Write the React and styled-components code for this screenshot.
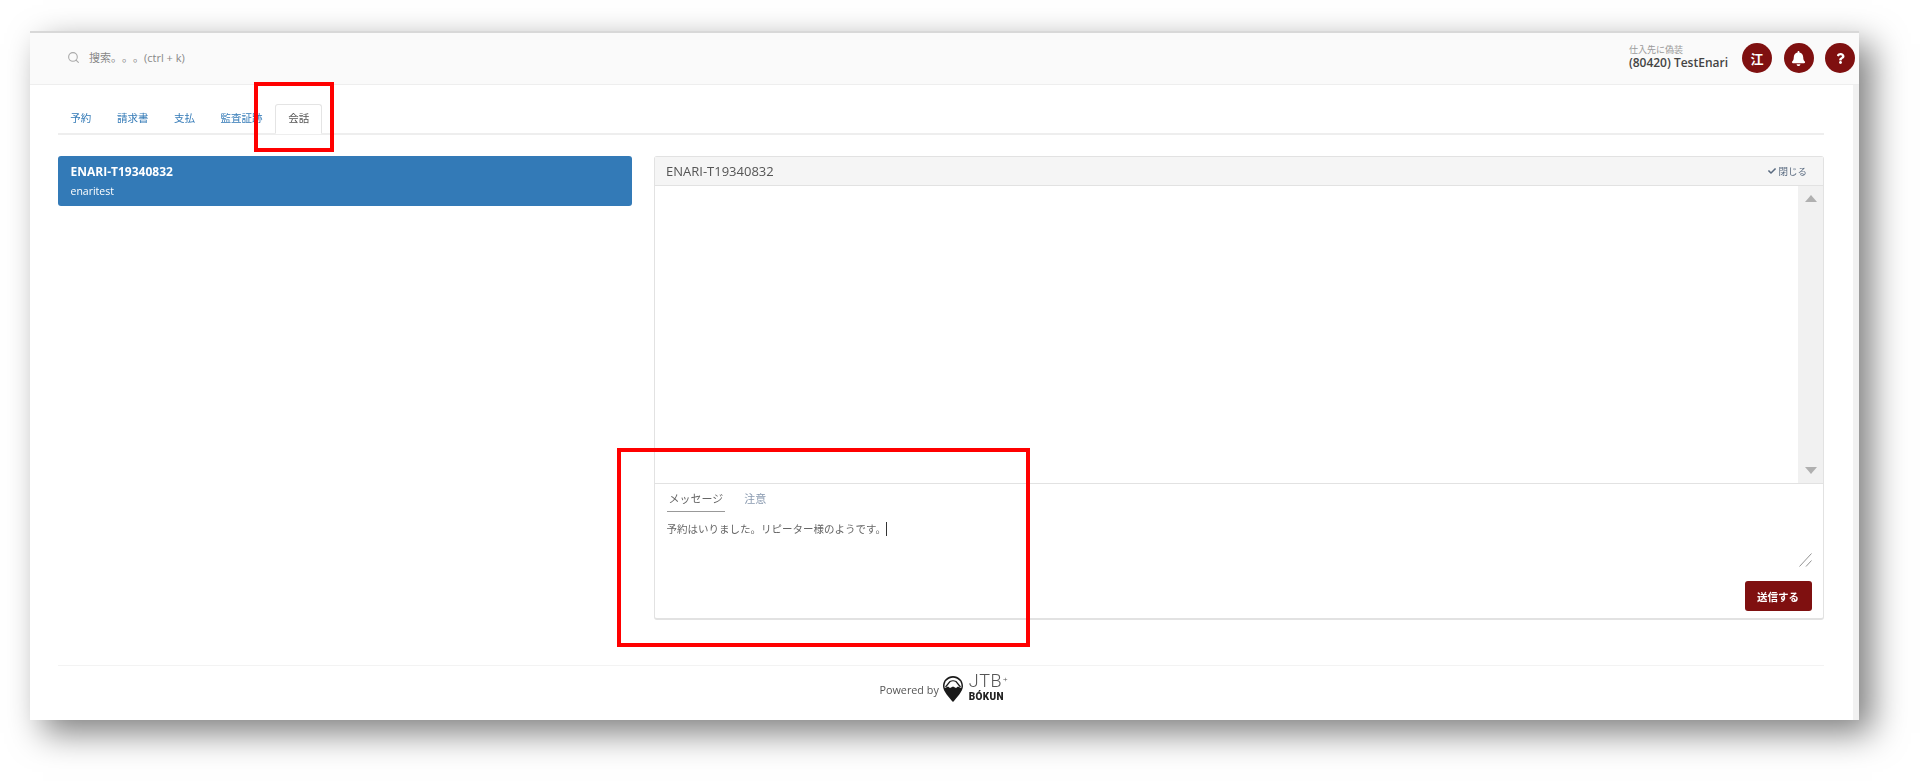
import React from "react";
import styled, { createGlobalStyle } from "styled-components";
import { FaBell, FaCheck, FaQuestion } from "react-icons/fa";
import { FiSearch } from "react-icons/fi";

const GlobalStyle = createGlobalStyle`
  html, body {
    margin: 0;
    background: #fff;
    overflow: hidden;
  }
  body {
    font-family: "Open Sans", "Noto Sans CJK JP", sans-serif;
    color: #555;
  }
`;

const tabs = ["予約", "請求書", "支払", "監査証跡", "会話"];

const App = () => {
  return (
    <Page>
      <GlobalStyle />
      <Window>
        <Header>
          <Search>
            <FiSearch size={13} color="#aaa" />
            <span>搜索。。。(ctrl + k)</span>
          </Search>
          <Account>
            <small>仕入先に偽装</small>
            <strong>(80420) TestEnari</strong>
          </Account>
          <Circles>
            <Circle>江</Circle>
            <Circle><FaBell size={15} /></Circle>
            <Circle><FaQuestion size={11} /></Circle>
          </Circles>
        </Header>
        <Body>
          <Content>
            <TabBar>
              {tabs.map((t) => (
                <Tab key={t} $active={t === "会話"}>{t}</Tab>
              ))}
            </TabBar>
            <Columns>
              <ListColumn>
                <Conversation>
                  <strong>ENARI-T19340832</strong>
                  <span>enaritest</span>
                </Conversation>
              </ListColumn>
              <Panel>
                <PanelHead>
                  <span>ENARI-T19340832</span>
                  <CloseLink><FaCheck size={8} />閉じる</CloseLink>
                </PanelHead>
                <Messages>
                  <Scrollbar>
                    <Arrow $up />
                    <Arrow />
                  </Scrollbar>
                </Messages>
                <Composer>
                  <ComposerTabs>
                    <ComposerTab $active>メッセージ</ComposerTab>
                    <ComposerTab>注意</ComposerTab>
                  </ComposerTabs>
                  <Draft>
                    予約はいりました。リピーター様のようです。<Caret />
                    <Grip width="13" height="14" viewBox="0 0 13 14">
                      <path d="M0.5 13.5 L12.5 0.5 M7 13.5 L12.5 7.5" stroke="#777" strokeWidth="0.8" fill="none" />
                    </Grip>
                  </Draft>
                  <SendRow>
                    <SendButton>送信する</SendButton>
                  </SendRow>
                </Composer>
              </Panel>
            </Columns>
            <Footer>
              <span>Powered by</span>
              <svg width="22" height="28" viewBox="0 0 22 28">
                <path d="M11 1C5.300 1 1 5.400 1 11c0 5.200 6.500 12 10 16 3.500-4 10-10.800 10-16C21 5.400 16.700 1 11 1z" fill="#1a1a1a" />
                <path d="M2.800 13c-.300-1-.300-1.500-.300-2 0-4.700 3.800-8.300 8.500-8.300s8.500 3.600 8.500 8.300c0 .500 0 1-.300 2z" fill="#fff" />
                <path d="M3.500 12 8 6.500c2-1 4-1 6 0l4.500 5.500" fill="none" stroke="#1a1a1a" strokeWidth="1.200" />
                <path d="M3 13l3-1.500 2 1.500 3-1.500 3 1.500 2-1.500 3 1.500v3H3z" fill="#1a1a1a" />
              </svg>
              <Brand>
                <BrandTop>JTB<sup>+</sup></BrandTop>
                <BrandBottom>BÓKUN</BrandBottom>
              </Brand>
            </Footer>
          </Content>
          <Gutter />
        </Body>
      </Window>
      <Annotation $x={254} $y={82} $w={80} $h={70} />
      <Annotation $x={617} $y={448} $w={413} $h={199} />
    </Page>
  );
};

const Page = styled.div`
  position: relative;
  width: 1920px;
  height: 781px;
  padding: 31px 61px 61px 30px;
  box-sizing: border-box;
`;

const Window = styled.div`
  height: 100%;
  display: flex;
  flex-direction: column;
  background: #fff;
  border-top: 2px solid #d8d8d8;
  box-sizing: border-box;
  box-shadow: 13px 13px 32px rgba(0, 0, 0, 0.5);
  filter: blur(0.4px);
`;

const Header = styled.header`
  height: 52px;
  flex: none;
  display: flex;
  align-items: center;
  box-sizing: border-box;
  background: #fafafa;
  border-bottom: 1px solid #eee;
  padding: 0 4px 1px 37px;
`;

const Search = styled.div`
  flex: 1;
  display: flex;
  align-items: center;
  gap: 9px;
  margin-bottom: 2px;
  font-size: 11px;
  color: #888;
  text-spacing-trim: space-all;
`;

const Account = styled.div`
  display: flex;
  flex-direction: column;
  margin: 0 14px 2px 0;
  small {
    font-size: 9px;
    line-height: 12px;
    color: #999;
  }
  strong {
    font-size: 12px;
    line-height: 14px;
    font-weight: 600;
    color: #444;
  }
`;

const Circles = styled.div`
  display: flex;
  gap: 11.500px;
`;

const Circle = styled.div`
  width: 30px;
  height: 30px;
  border-radius: 50%;
  background: #7f1010;
  color: #fff;
  display: flex;
  align-items: center;
  justify-content: center;
  font-size: 13px;
  font-weight: 700;
`;

const Body = styled.div`
  flex: 1;
  display: flex;
  min-height: 0;
`;

const Content = styled.main`
  flex: 1;
  display: flex;
  flex-direction: column;
  padding: 19px 29px 0 27.500px;
  min-width: 0;
`;

const Gutter = styled.div`
  width: 6px;
  flex: none;
  background: #f1f1f1;
`;

const TabBar = styled.nav`
  height: 29px;
  flex: none;
  display: flex;
  border-bottom: 2px solid #eee;
`;

const Tab = styled.div`
  height: ${(p) => (p.$active ? "30px" : "29px")};
  box-sizing: border-box;
  padding: 0 11.800px 3px;
  display: flex;
  align-items: center;
  font-size: 10.500px;
  color: ${(p) => (p.$active ? "#555" : "#337ab7")};
  background: #fff;
  border: 1px solid ${(p) => (p.$active ? "#e4e4e4" : "transparent")};
  border-bottom-color: ${(p) => (p.$active ? "#fff" : "transparent")};
  border-radius: 3px 3px 0 0;
`;

const Columns = styled.div`
  flex: 1;
  display: flex;
  gap: 22px;
  margin-top: 21px;
  min-height: 0;
`;

const ListColumn = styled.div`
  width: 574.500px;
  flex: none;
`;

const Conversation = styled.div`
  height: 50px;
  box-sizing: border-box;
  padding: 7px 13px;
  display: flex;
  flex-direction: column;
  gap: 3px;
  background: #337ab7;
  border-radius: 3px;
  color: #fff;
  strong {
    font-size: 12px;
    line-height: 17px;
    font-weight: 700;
  }
  span {
    font-size: 10.500px;
    line-height: 16px;
  }
`;

const Panel = styled.section`
  flex: 1;
  height: 464px;
  display: flex;
  flex-direction: column;
  border: 1px solid #e2e2e2;
  border-bottom-width: 2px;
  border-radius: 3px;
  box-sizing: border-box;
  min-width: 0;
`;

const PanelHead = styled.div`
  height: 29px;
  flex: none;
  box-sizing: border-box;
  display: flex;
  align-items: center;
  justify-content: space-between;
  padding: 0 16px 0 11px;
  background: #f5f5f5;
  border-bottom: 1px solid #e2e2e2;
  font-size: 13px;
  color: #555;
`;

const CloseLink = styled.span`
  display: flex;
  align-items: center;
  gap: 2px;
  font-size: 9.500px;
  color: #5a6b80;
`;

const Messages = styled.div`
  height: 298px;
  flex: none;
  display: flex;
  justify-content: flex-end;
  border-bottom: 1px solid #e2e2e2;
  box-sizing: border-box;
`;

const Scrollbar = styled.div`
  width: 25px;
  background: #f1f1f1;
  display: flex;
  flex-direction: column;
  justify-content: space-between;
  align-items: center;
  padding: 9px 0;
`;

const Arrow = styled.div`
  width: 0;
  height: 0;
  border-left: 6px solid transparent;
  border-right: 6px solid transparent;
  ${(p) =>
    p.$up ? "border-bottom: 7px solid #b0b0b0;" : "border-top: 7px solid #b0b0b0;"}
`;

const Composer = styled.div`
  flex: 1;
  display: flex;
  flex-direction: column;
  padding: 0 11.500px;
  min-height: 0;
`;

const ComposerTabs = styled.div`
  display: flex;
  gap: 19px;
  height: 28px;
  flex: none;
`;

const ComposerTab = styled.div`
  display: flex;
  align-items: center;
  padding: 0 ${(p) => (p.$active ? "2px" : "0")};
  font-size: 11px;
  color: ${(p) => (p.$active ? "#666" : "#8a9ab0")};
  border-bottom: 1px solid ${(p) => (p.$active ? "#999" : "transparent")};
`;

const Draft = styled.div`
  position: relative;
  height: 46px;
  flex: none;
  margin-top: 8px;
  font-size: 10.500px;
  line-height: 18px;
  color: #666;
`;

const Caret = styled.span`
  display: inline-block;
  width: 1px;
  height: 14px;
  background: #333;
  vertical-align: -3px;
`;

const Grip = styled.svg`
  position: absolute;
  right: 0;
  bottom: -1px;
`;

const SendRow = styled.div`
  display: flex;
  justify-content: flex-end;
  margin-top: 15px;
`;

const SendButton = styled.button`
  width: 67px;
  height: 30px;
  border: none;
  border-radius: 3px;
  background: #7f1010;
  color: #fff;
  font-family: inherit;
  font-size: 10.500px;
  font-weight: 700;
  padding: 0;
`;

const Footer = styled.footer`
  height: 55px;
  flex: none;
  box-sizing: border-box;
  display: flex;
  align-items: center;
  justify-content: center;
  gap: 3px;
  border-top: 1px solid #f3f3f3;
  font-size: 10.800px;
  color: #555;
  padding: 0 0 8px 6px;
`;

const Brand = styled.div`
  display: flex;
  flex-direction: column;
  margin: 0 0 6px 2px;
  font-family: Roboto, sans-serif;
`;

const BrandTop = styled.div`
  font-size: 18px;
  line-height: 21px;
  font-weight: 300;
  letter-spacing: 0.500px;
  color: #555;
  sup {
    font-size: 8px;
    line-height: 0;
    vertical-align: 5px;
    margin-left: 1px;
  }
`;

const BrandBottom = styled.div`
  font-size: 10px;
  line-height: 11px;
  font-weight: 900;
  color: #222;
  letter-spacing: 0.300px;
`;

const Annotation = styled.div`
  position: absolute;
  left: ${(p) => p.$x}px;
  top: ${(p) => p.$y}px;
  width: ${(p) => p.$w}px;
  height: ${(p) => p.$h}px;
  box-sizing: border-box;
  border: 4.500px solid #f00;
`;

export default App;
